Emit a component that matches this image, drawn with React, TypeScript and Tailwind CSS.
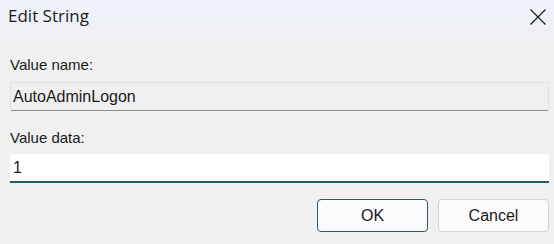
const App = () => {
  return (
    <div
      className="w-[554px] h-[244px] bg-[#f0f0f0] flex flex-col overflow-hidden"
      style={{ fontFamily: '"Liberation Sans", Arial, sans-serif' }}
    >
      <div className="h-10 flex items-start justify-between bg-gradient-to-b from-[#edf2fb] to-[#f0f1f3] shrink-0">
        <span
          className="ml-2 mt-[4px] text-[17px] text-[#1b1b1b] leading-6"
          style={{ fontFamily: '"Open Sans", "Noto Sans", sans-serif' }}
        >
          Edit String
        </span>
        <button className="mt-[9px] mr-[8px] w-4 h-4 flex items-center justify-center text-[#1a1a1a]">
          <svg width="16" height="16" viewBox="0 0 16 16" fill="none" stroke="currentColor" strokeWidth="1.2">
            <path d="M0.5 0.5 L15.5 15.5 M15.5 0.5 L0.5 15.5" />
          </svg>
        </button>
      </div>

      <div className="flex flex-col pl-[10px] pr-[5px]">
        <label className="mt-4 text-[15px] leading-[17px] text-[#1a1a1a]">Value name:</label>
        <div className="mt-[9px] h-[29px] flex items-center pl-[2px] bg-[#efefef] border border-[#e2e2e2] border-b-[#8c8c8c] rounded-[2px] text-[16px] text-[#1a1a1a]">
          AutoAdminLogon
        </div>

        <label className="mt-[18px] text-[15px] leading-[17px] text-[#1a1a1a]">Value data:</label>
        <div className="mt-[8px] h-[29px] flex items-center pl-[3px] bg-white border-b-2 border-[#1d5b79] rounded-t-[2px] text-[16px] text-[#1a1a1a]">
          1
        </div>

        <div className="mt-4 flex justify-end gap-[10px]">
          <button className="w-[111px] h-[33px] rounded-[4px] border border-[#2b5876] bg-[#f9fbfd] text-[16px] text-[#1a1a1a]">
            OK
          </button>
          <button className="w-[111px] h-[33px] rounded-[4px] border border-[#d4d4d4] bg-[#fcfcfc] text-[16px] text-[#1a1a1a]">
            Cancel
          </button>
        </div>
      </div>
    </div>
  );
};

export default App;
